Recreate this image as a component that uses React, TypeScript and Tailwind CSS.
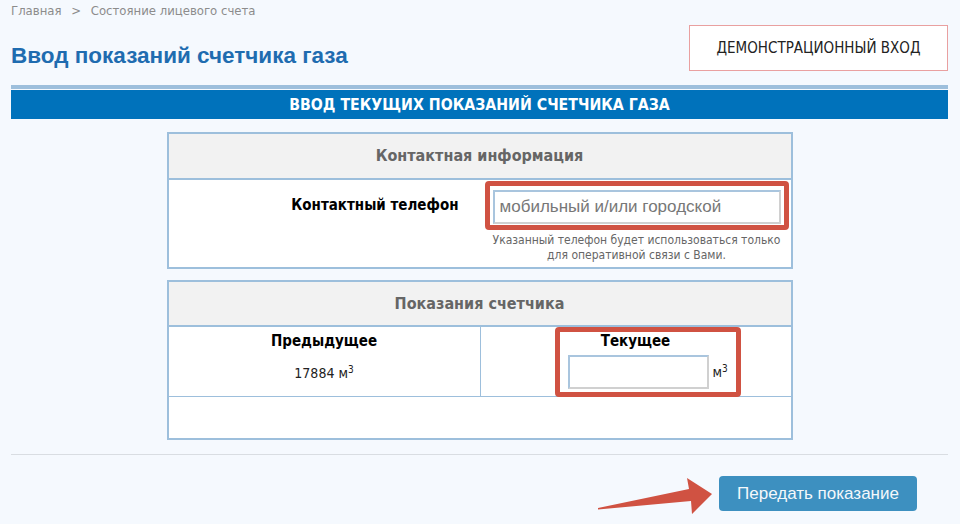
const tahoma = "font-['DejaVu_Sans_Condensed','DejaVu_Sans',sans-serif]";
const arial = "font-['Liberation_Sans',Arial,sans-serif]";

const App = () => {
  return (
    <div className="relative w-[960px] h-[524px] overflow-hidden bg-[#f5f9fe] pl-[11px] pr-[12px]">
      {/* Top: breadcrumb, title, demo login */}
      <div className="flex justify-between">
        <div>
          <div className={`${tahoma} pt-[3px] text-[13px] leading-[16px] text-[#8c8c8c]`}>
            Главная <span className="mx-[6px]">&gt;</span> Состояние лицевого счета
          </div>
          <h1 className={`${arial} mt-[25px] text-[22.5px] leading-[24px] font-bold text-[#1f6cb0]`}>
            Ввод показаний счетчика газа
          </h1>
        </div>
        <div
          className={`${tahoma} mt-[25px] flex h-[46px] w-[259px] items-center justify-center border border-[#e9a0a0] bg-white text-[15px] text-[#222]`}
        >
          ДЕМОНСТРАЦИОННЫЙ ВХОД
        </div>
      </div>

      <div className="mt-[14px] h-[4px] bg-[#9dbfdc]" />
      <div
        className={`${tahoma} mt-[1px] flex h-[29px] items-center justify-center bg-[#0072bb] text-[15.75px] font-bold text-white`}
      >
        ВВОД ТЕКУЩИХ ПОКАЗАНИЙ СЧЕТЧИКА ГАЗА
      </div>

      {/* Contact info */}
      <div className="mx-auto mt-[13px] w-[626px] border-2 border-[#9dbfdc] bg-white">
        <div
          className={`${tahoma} flex h-[46px] items-center justify-center border-b-2 border-[#9dbfdc] bg-[#f2f2f2] text-[16px] font-bold text-[#666]`}
        >
          Контактная информация
        </div>
        <div className="flex h-[87px] items-start pt-[10px]">
          <div className={`${tahoma} mt-[6px] w-[300px] pr-[10px] text-right text-[15px] leading-[18px] font-bold text-black`}>
            Контактный телефон
          </div>
          <div className="ml-[24px] w-[288px]">
            <input
              type="text"
              placeholder="мобильный и/или городской"
              className={`${arial} h-[34px] w-full border-2 border-t-[#a9c5de] border-l-[#a9c5de] border-r-[#d0d0d0] border-b-[#d0d0d0] bg-white px-[5px] text-[17px] text-[#555] outline-none placeholder:text-[#777]`}
            />
            <p className={`${tahoma} mt-[9px] -mx-[4px] text-center text-[12px] leading-[15px] whitespace-nowrap text-[#666]`}>
              Указанный телефон будет использоваться только
              <br />
              для оперативной связи с Вами.
            </p>
          </div>
        </div>
      </div>

      {/* Meter readings */}
      <div className="mx-auto mt-[11px] w-[626px] border-2 border-[#9dbfdc] bg-white">
        <div
          className={`${tahoma} flex h-[45px] items-center justify-center border-b-2 border-[#9dbfdc] bg-[#f2f2f2] text-[16px] font-bold text-[#666]`}
        >
          Показания счетчика
        </div>
        <div className="flex h-[70px] border-b border-[#9dbfdc]">
          <div className={`${tahoma} w-[311px] pt-[5px] text-center`}>
            <div className="text-[15px] leading-[18px] font-bold text-black">Предыдущее</div>
            <div className="mt-[15px] text-[14px] leading-[17px] text-[#222]">
              17884 м<sup className="text-[10px]">3</sup>
            </div>
          </div>
          <div className={`${tahoma} flex-1 border-l border-[#9dbfdc] pt-[5px]`}>
            <div className="text-center text-[15px] leading-[18px] font-bold text-black">Текущее</div>
            <div className="mt-[5px] flex items-center pl-[87px]">
              <input
                type="text"
                className="h-[34px] w-[141px] border-2 border-t-[#a9c5de] border-l-[#a9c5de] border-r-[#d0d0d0] border-b-[#d0d0d0] bg-white outline-none"
              />
              <span className="ml-[4px] text-[14px] text-[#222]">
                м<sup className="text-[10px]">3</sup>
              </span>
            </div>
          </div>
        </div>
        <div className="h-[41px]" />
      </div>

      <div className="mt-[14px] h-px bg-[#d9dde2]" />

      <div className="mt-[21px] flex justify-end pr-[31px]">
        <button
          type="button"
          className={`${arial} h-[35px] w-[198px] rounded-[4px] bg-[#3d90c0] text-[17px] text-[#f4f8fb]`}
        >
          Передать показание
        </button>
      </div>

      {/* Annotation overlays */}
      <div className="pointer-events-none absolute left-[485px] top-[181px] h-[49px] w-[304px] rounded-[4px] border-[5px] border-[#d05242]" />
      <div className="pointer-events-none absolute left-[555px] top-[327px] h-[70px] w-[186px] rounded-[4px] border-[5px] border-[#d05242]" />
      <svg
        className="pointer-events-none absolute left-0 top-0"
        width="960"
        height="524"
        viewBox="0 0 960 524"
      >
        <polygon
          points="598,508 689,489 687,478 712,494 692,514 691,501 598,509.5"
          fill="#d05242"
        />
      </svg>
    </div>
  );
};

export default App;
